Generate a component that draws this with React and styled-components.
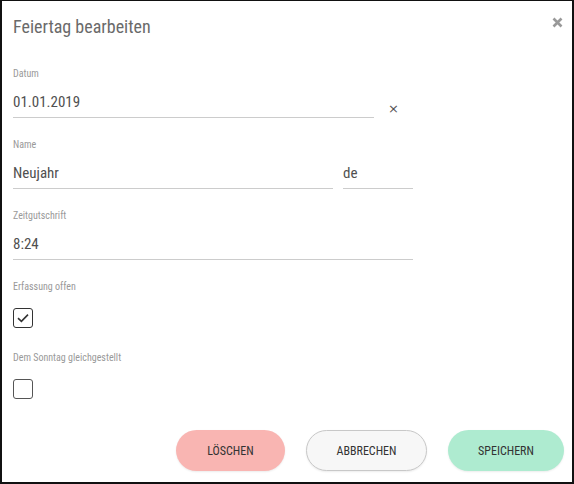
import React, { useState } from 'react';
import styled, { createGlobalStyle } from 'styled-components';

const GlobalStyle = createGlobalStyle`
  html, body {
    margin: 0;
    padding: 0;
    background: #fff;
  }
  body {
    font-family: "Roboto Condensed", Roboto, "Liberation Sans", sans-serif;
    font-stretch: condensed;
  }
`;

const Frame = styled.div`
  box-sizing: border-box;
  width: 574px;
  height: 484px;
  border: 2px solid #111;
  border-top-width: 1px;
  background: #fff;
  display: flex;
  flex-direction: column;
`;

const Header = styled.div`
  display: flex;
  justify-content: space-between;
  align-items: flex-start;
  padding: 14px 9px 0 11px;
  height: 52px;
  box-sizing: border-box;
`;

const Title = styled.h2`
  margin: 0;
  font-size: 18px;
  font-weight: 400;
  color: #6a6a6a;
  line-height: 24px;
`;

const CloseButton = styled.button`
  border: none;
  background: none;
  padding: 0;
  margin-top: 2px;
  width: 11px;
  height: 11px;
  cursor: pointer;
  display: flex;
`;

const Body = styled.div`
  padding: 14px 0 0 11px;
  display: flex;
  flex-direction: column;
`;

const Field = styled.div`
  height: 71px;
  display: flex;
  flex-direction: column;
`;

const Label = styled.label`
  font-size: 10px;
  color: #999;
  line-height: 14px;
  height: 14px;
`;

const Row = styled.div`
  display: flex;
  align-items: center;
  gap: 10px;
  margin-top: 12px;
`;

const Input = styled.input`
  box-sizing: border-box;
  width: ${p => p.$w}px;
  border: none;
  border-bottom: 1px solid #ccc;
  outline: none;
  font-family: inherit;
  font-stretch: condensed;
  font-size: 15px;
  color: #505050;
  padding: 0 0 6px 0;
  height: 25px;
  background: transparent;
`;

const ClearButton = styled.button`
  border: none;
  background: none;
  padding: 0;
  margin-left: 4px;
  margin-top: 5px;
  font-size: 13px;
  color: #555;
  font-family: "DejaVu Sans", sans-serif;
  line-height: 1;
`;

const Box = styled.div`
  box-sizing: border-box;
  width: 20px;
  height: 20px;
  border: 1px solid ${p => (p.$checked ? '#333' : '#555')};
  border-radius: 3px;
  margin-top: 14px;
  display: flex;
  align-items: center;
  justify-content: center;
  cursor: pointer;
`;

const Footer = styled.div`
  display: flex;
  justify-content: flex-end;
  gap: 21px;
  padding: 0 8px 0 0;
  margin-top: auto;
  margin-bottom: 11px;
`;

const Button = styled.button`
  height: 41px;
  width: ${p => p.$w}px;
  border-radius: 21px;
  font-family: inherit;
  font-stretch: condensed;
  font-size: 12px;
  color: #333;
  text-transform: uppercase;
  cursor: pointer;
  border: 1px solid ${p => p.$border || 'transparent'};
  background: ${p => p.$bg};
  box-shadow: 0 1px 2px rgba(0, 0, 0, 0.08);
`;

const Checkbox = ({ checked, onChange }) => (
  <Box $checked={checked} onClick={() => onChange(!checked)}>
    {checked && (
      <svg width="14" height="14" viewBox="0 0 14 14">
        <path d="M2 7.2 L5.4 10.4 L12 3.6" fill="none" stroke="#333" strokeWidth="1.6" />
      </svg>
    )}
  </Box>
);

const App = () => {
  const [open, setOpen] = useState(true);
  const [sunday, setSunday] = useState(false);

  return (
    <>
      <GlobalStyle />
      <Frame>
        <Header>
          <Title>Feiertag bearbeiten</Title>
          <CloseButton aria-label="Schließen">
            <svg width="11" height="11" viewBox="0 0 11 11">
              <path d="M1.5 1.5 L9.5 9.5 M9.5 1.5 L1.5 9.5" stroke="#999" strokeWidth="2.6" />
            </svg>
          </CloseButton>
        </Header>
        <Body>
          <Field>
            <Label>Datum</Label>
            <Row>
              <Input $w={361} defaultValue="01.01.2019" />
              <ClearButton>×</ClearButton>
            </Row>
          </Field>
          <Field>
            <Label>Name</Label>
            <Row>
              <Input $w={320} defaultValue="Neujahr" />
              <Input $w={70} defaultValue="de" />
            </Row>
          </Field>
          <Field>
            <Label>Zeitgutschrift</Label>
            <Row>
              <Input $w={400} defaultValue="8:24" />
            </Row>
          </Field>
          <Field>
            <Label>Erfassung offen</Label>
            <Checkbox checked={open} onChange={setOpen} />
          </Field>
          <Field>
            <Label>Dem Sonntag gleichgestellt</Label>
            <Checkbox checked={sunday} onChange={setSunday} />
          </Field>
        </Body>
        <Footer>
          <Button $w={109} $bg="#f9b5b2">Löschen</Button>
          <Button $w={121} $bg="#f7f7f7" $border="#c8c8c8">Abbrechen</Button>
          <Button $w={116} $bg="#aeebd0">Speichern</Button>
        </Footer>
      </Frame>
    </>
  );
};

export default App;
